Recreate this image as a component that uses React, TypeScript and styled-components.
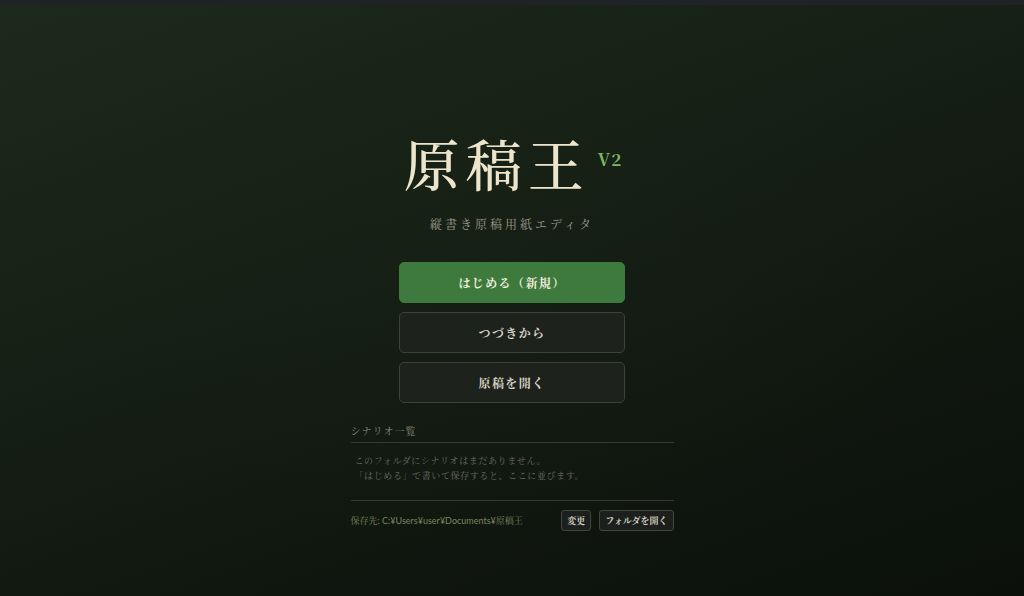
import styled, { createGlobalStyle } from "styled-components";

const GlobalStyle = createGlobalStyle`
  html, body {
    margin: 0;
    padding: 0;
    height: 100%;
    background: #0e130e;
  }
  #root {
    height: 100%;
  }
`;

const serif = `"Noto Serif CJK JP", "Liberation Serif", "Noto Sans CJK JP", serif`;

const Page = styled.div`
  width: 100%;
  height: 100vh;
  display: flex;
  flex-direction: column;
  overflow: hidden;
  font-family: ${serif};
  background: radial-gradient(
      ellipse at 50% 45%,
      rgba(24, 34, 22, 0.35) 0%,
      rgba(0, 0, 0, 0) 60%
    ),
    linear-gradient(160deg, #1d2a1b 0%, #172116 35%, #111810 65%, #0b100b 100%);
`;

const TopBar = styled.div`
  height: 5px;
  background: #202326;
  flex-shrink: 0;
`;

const Main = styled.main`
  flex: 1;
  display: flex;
  flex-direction: column;
  align-items: center;
  padding-top: 125px;
`;

const TitleRow = styled.div`
  display: flex;
  align-items: flex-start;
  margin-left: 2px;
`;

const Title = styled.h1`
  margin: 0;
  font-size: 56px;
  line-height: 65px;
  font-weight: 500;
  letter-spacing: 6px;
  color: #ece5cc;
`;

const Version = styled.span`
  margin-left: 8px;
  margin-top: 16px;
  font-size: 17px;
  font-weight: 700;
  letter-spacing: 1px;
  color: #7fb765;
`;

const Subtitle = styled.p`
  margin: 21px 0 0;
  font-size: 12px;
  line-height: 16px;
  letter-spacing: 3px;
  color: #9c9a8c;
`;

const Buttons = styled.div`
  display: flex;
  flex-direction: column;
  gap: 9px;
  margin-top: 30px;
  width: 226px;
`;

const MenuButton = styled.button<{ primary?: boolean }>`
  height: 41px;
  border-radius: 5px;
  font-family: ${serif};
  font-size: 12px;
  font-weight: 700;
  letter-spacing: 1.4px;
  cursor: pointer;
  color: ${(p) => (p.primary ? "#f2eedf" : "#d9d5c5")};
  background: ${(p) => (p.primary ? "#3e7a3e" : "#1e221d")};
  border: 1px solid ${(p) => (p.primary ? "#3e7a3e" : "#3d4239")};
`;

const Section = styled.section`
  width: 323px;
  margin-top: 20px;
`;

const SectionTitle = styled.div`
  font-size: 10px;
  line-height: 16px;
  letter-spacing: 1px;
  color: #8d8b7e;
  padding-bottom: 3px;
  border-bottom: 1px solid #343b31;
`;

const EmptyText = styled.div`
  padding: 10px 4px 17px;
  font-size: 9px;
  line-height: 15px;
  letter-spacing: 0.6px;
  color: #6f6e63;
  border-bottom: 1px solid #343b31;
`;

const Footer = styled.div`
  display: flex;
  align-items: center;
  gap: 8px;
  padding-top: 9px;
`;

const SavePath = styled.div`
  flex: 1;
  font-family: "Lato", "Noto Serif CJK JP", sans-serif;
  font-size: 9px;
  color: #77865f;
  white-space: nowrap;
`;

const SmallButton = styled.button`
  height: 21px;
  padding: 0 5px;
  border-radius: 3px;
  font-family: ${serif};
  font-size: 9px;
  font-weight: 700;
  white-space: nowrap;
  color: #d3cfc2;
  background: #1c1f1b;
  border: 1px solid #42463e;
  cursor: pointer;
`;

const App = () => {
  return (
    <Page>
      <GlobalStyle />
      <TopBar />
      <Main>
        <TitleRow>
          <Title>原稿王</Title>
          <Version>V2</Version>
        </TitleRow>
        <Subtitle>縦書き原稿用紙エディタ</Subtitle>
        <Buttons>
          <MenuButton primary>はじめる（新規）</MenuButton>
          <MenuButton>つづきから</MenuButton>
          <MenuButton>原稿を開く</MenuButton>
        </Buttons>
        <Section>
          <SectionTitle>シナリオ一覧</SectionTitle>
          <EmptyText>
            このフォルダにシナリオはまだありません。
            <br />
            「はじめる」で書いて保存すると、ここに並びます。
          </EmptyText>
          <Footer>
            <SavePath>保存先: C:¥Users¥user¥Documents¥原稿王</SavePath>
            <SmallButton>変更</SmallButton>
            <SmallButton>フォルダを開く</SmallButton>
          </Footer>
        </Section>
      </Main>
    </Page>
  );
};

export default App;
